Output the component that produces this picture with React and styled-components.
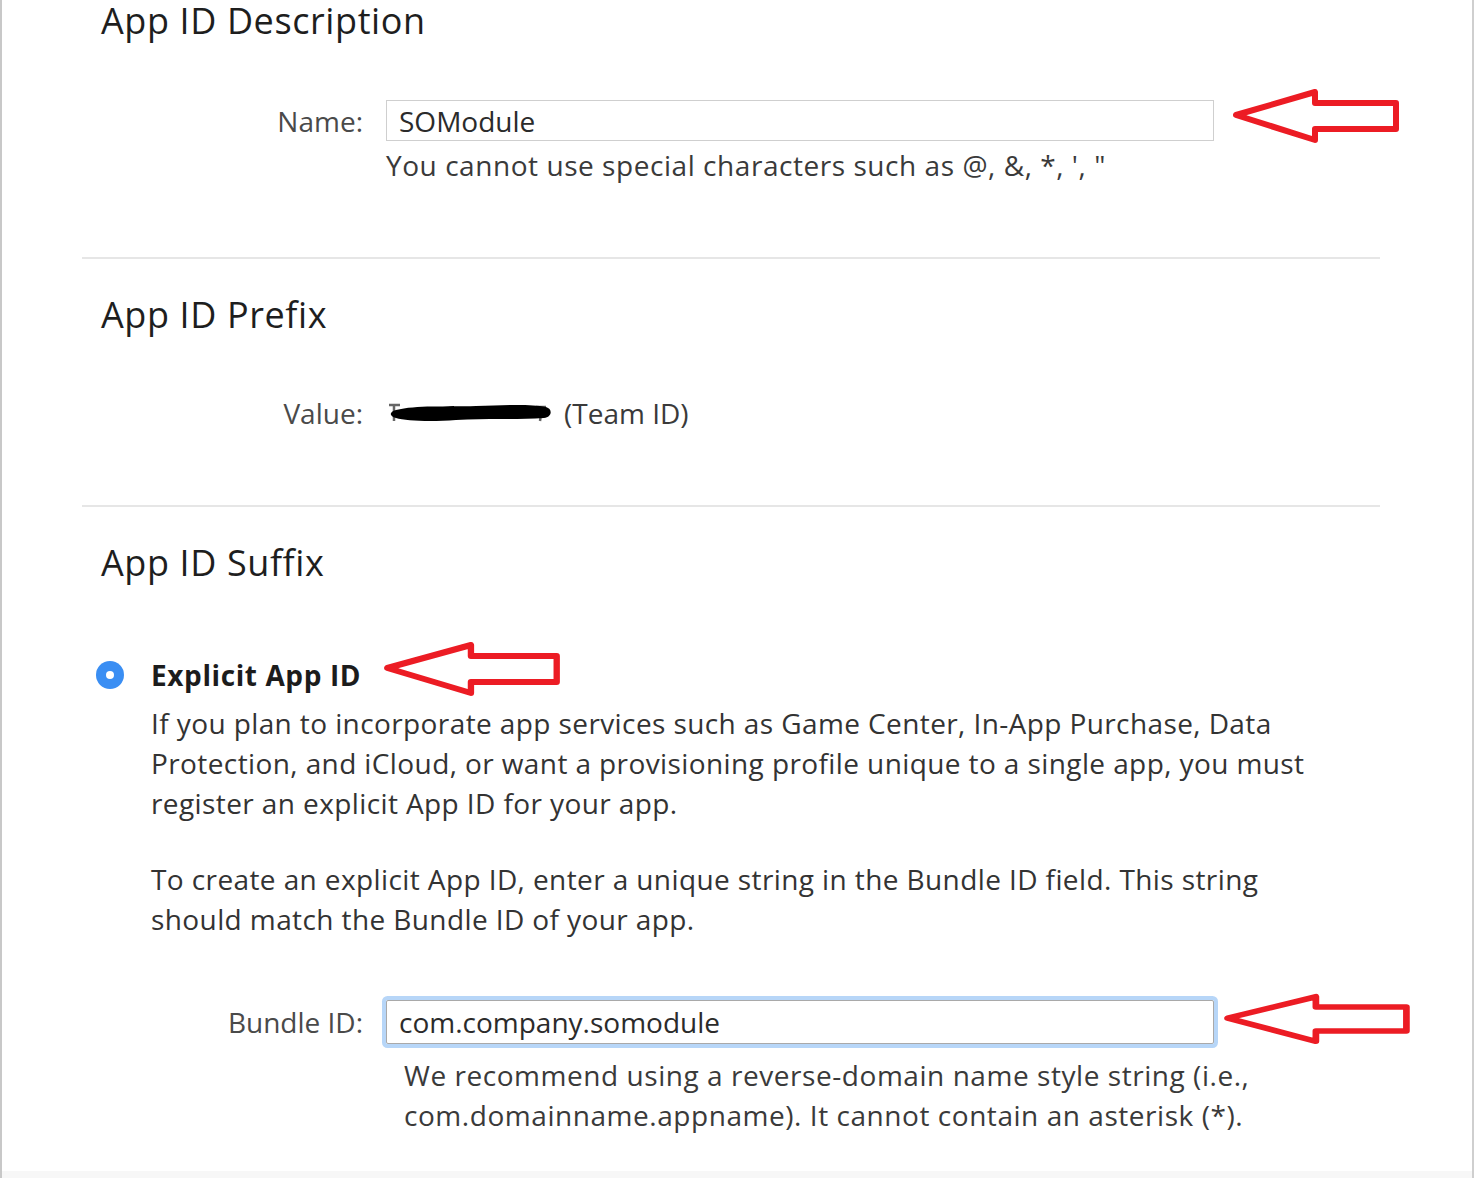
import React from 'react';
import styled,{createGlobalStyle} from 'styled-components';

const Global=createGlobalStyle`
body{
margin:0;
background:#fff;
font-family:"Open Sans","Noto Sans",sans-serif;
}
`;

const Frame=styled.div`
width:1470px;
height:1178px;
border-left:2px solid #c8c8c8;
border-right:2px solid #cfcfcf;
background:#fff;
display:flex;
flex-direction:column;
overflow:hidden;
`;
const Section=styled.div`
display:flex;
flex-direction:column;
`;
const Heading=styled.h2`
margin:${p=>p.$top||0}px 0 0 99px;
font-size:36px;
line-height:42px;
letter-spacing:0.6px;
font-weight:400;
color:#1e1e1e;
`;
const Row=styled.div`
display:grid;
grid-template-columns:361px auto;
column-gap:23px;
align-items:center;
margin-top:${p=>p.$top||0}px;
`;
const Label=styled.div`
text-align:right;
font-size:28px;
line-height:40px;
color:#4a4a4a;
`;
const Field=styled.div`
display:flex;
align-items:flex-start;
`;
const Input=styled.div`
box-sizing:border-box;
width:828px;
height:${p=>p.$focus?44:41}px;
border:1px solid ${p=>p.$focus?'#a9a9a9':'#cfcfcf'};
box-shadow:${p=>p.$focus?'0 0 0 4px #b7d6f8':'none'};
border-radius:${p=>p.$focus?'2px':'0'};
padding-left:12px;
display:flex;
align-items:center;
font-size:28px;
color:#2b2b2b;
`;
const Help=styled.p`
margin:${p=>p.$top||0}px 0 0 ${p=>p.$left||384}px;
font-size:28px;
line-height:40px;
letter-spacing:0.55px;
color:#3a3a3a;
`;
const Divider=styled.hr`
margin:${p=>p.$top||0}px 0 0 80px;
width:1298px;
border:none;
border-top:2px solid #e6e6e6;
`;
const Value=styled.div`
display:flex;
align-items:center;
gap:12px;
font-size:28px;
line-height:40px;
color:#3a3a3a;
`;
const RadioRow=styled.div`
display:flex;
align-items:center;
margin:${p=>p.$top||0}px 0 0 94px;
height:40px;
`;
const Radio=styled.span`
width:28px;
height:28px;
border-radius:50%;
background:#3a8ef3;
display:flex;
align-items:center;
justify-content:center;
margin-right:27px;
&::after{
content:'';
width:8px;
height:8px;
border-radius:50%;
background:#fff;
}
`;
const Option=styled.span`
font-size:28px;
font-weight:700;
letter-spacing:0.6px;
color:#1c1c1c;
`;
const Para=styled.p`
margin:${p=>p.$top||0}px 0 0 149px;
width:1300px;
font-size:28px;
line-height:40px;
letter-spacing:0.4px;
color:#333;
`;
const Bottom=styled.div`
margin-top:auto;
height:7px;
background:#f7f7f7;
`;

const Arrow=({w=170,h=56,ml=0,mt=0,mb=0})=>(
  <svg width={w} height={h} viewBox="0 0 170 56" preserveAspectRatio="none" style={{margin:`${mt}px 0 ${mb}px ${ml}px`,flexShrink:0}}>
    <path d="M5 27 L84 4 L84 15 L165 15 L165 41 L84 41 L84 52 Z" fill="none" stroke="#ec1c24" strokeWidth="6" strokeLinejoin="round"/>
  </svg>
);

const Redacted=()=>(
  <svg width="166" height="28" viewBox="0 0 166 28">
    <path d="M3 6 L14 6 M8 6 L8 22" stroke="#666" strokeWidth="2.5"/>
    <path d="M150 8 L160 8 M156 8 L154 22" stroke="#666" strokeWidth="2.5"/>
    <path d="M10 11 C30 6 60 8 90 7 C120 6 145 5 160 8 C167 10 166 18 158 19 C130 21 100 19 70 21 C45 23 20 22 10 19 C3 17 3 13 10 11 Z" fill="#000"/>
  </svg>
);

const App=()=>{
  return (
    <Frame>
      <Global/>
      <Section>
        <Heading>App ID Description</Heading>
        <Row $top={58}>
          <Label>Name:</Label>
          <Field>
            <Input>SOModule</Input>
            <Arrow ml={17} mt={-12} mb={-3} w={170} h={56}/>
          </Field>
        </Row>
        <Help $top={4}>You cannot use special characters such as @, &amp;, *, ', "</Help>
      </Section>
      <Divider $top={72}/>
      <Section>
        <Heading $top={35}>App ID Prefix</Heading>
        <Row $top={57}>
          <Label>Value:</Label>
          <Value><Redacted/>(Team ID)</Value>
        </Row>
      </Section>
      <Divider $top={72}/>
      <Section>
        <Heading $top={35}>App ID Suffix</Heading>
        <RadioRow $top={71}>
          <Radio/>
          <Option>Explicit App ID</Option>
          <Arrow ml={21} mb={12} w={180} h={56}/>
        </RadioRow>
        <Para $top={8}>If you plan to incorporate app services such as Game Center, In-App Purchase, Data<br/>Protection, and iCloud, or want a provisioning profile unique to a single app, you must<br/>register an explicit App ID for your app.</Para>
        <Para $top={36}>To create an explicit App ID, enter a unique string in the Bundle ID field. This string<br/>should match the Bundle ID of your app.</Para>
        <Row $top={61}>
          <Label>Bundle ID:</Label>
          <Field>
            <Input $focus>com.company.somodule</Input>
            <Arrow ml={8} mt={-7} mb={-1} w={190} h={52}/>
          </Field>
        </Row>
        <Help $top={11} $left={402}>We recommend using a reverse-domain name style string (i.e.,<br/>com.domainname.appname). It cannot contain an asterisk (*).</Help>
      </Section>
      <Bottom/>
    </Frame>
  );
}
export default App;
